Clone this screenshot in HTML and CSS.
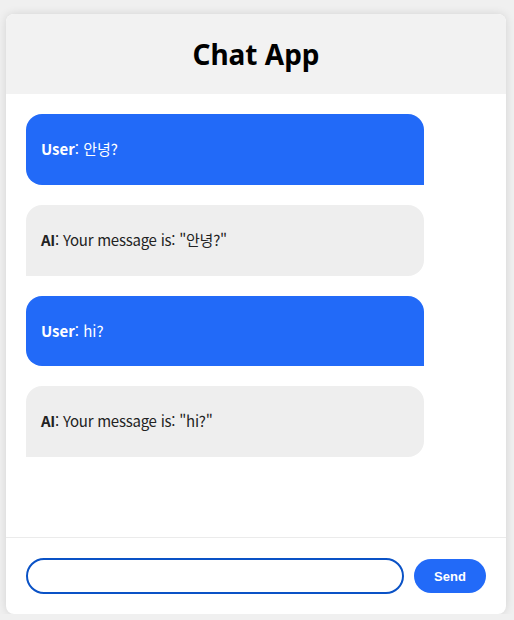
FILE: index.html
```html
<!DOCTYPE html>
<html lang="ko">
<head>
<meta charset="utf-8">
<title>Chat App</title>
<link rel="stylesheet" href="styles.css">
</head>
<body>
<div class="app">
  <header class="header"><h1 class="title">Chat App</h1></header>
  <main class="messages">
    <div class="msg user"><strong>User</strong>: 안녕?</div>
    <div class="msg ai"><strong>AI</strong>: Your message is: "안녕?"</div>
    <div class="msg user"><strong>User</strong>: hi?</div>
    <div class="msg ai"><strong>AI</strong>: Your message is: "hi?"</div>
  </main>
  <footer class="footer">
    <input class="input" type="text">
    <button class="send">Send</button>
  </footer>
</div>
</body>
</html>
```
FILE: styles.css
```css
html, body { margin: 0; padding: 0; }
body {
  background: #f0f0f0;
  font-family: "Noto Sans CJK KR", "Noto Sans", sans-serif;
  padding: 14px 8px 0 6px;
}
.app {
  width: 500px;
  height: 600px;
  background: #fff;
  border-radius: 8px;
  box-shadow: 0 0 10px rgba(0,0,0,0.12);
  display: flex;
  flex-direction: column;
  overflow: hidden;
}
.header {
  background: #f2f2f2;
  height: 80px;
  display: flex;
  align-items: center;
  justify-content: center;
}
.title {
  margin: 0;
  font-family: "Noto Sans", "Noto Sans CJK KR", sans-serif;
  font-size: 28px;
  font-weight: 700;
  color: #000;
  line-height: 1;
  padding-top: 0;
}
.messages {
  flex: 1;
  padding: 20px 20px 0;
  display: flex;
  flex-direction: column;
  gap: 20px;
}
.msg {
  width: 368px;
  padding: 25px 15px;
  line-height: 20.75px;
  font-size: 15px;
}
.msg strong { font-weight: 700; }
.ai { letter-spacing: -0.25px; }
.user {
  background: #226af8;
  color: #fff;
  border-radius: 16px 16px 0 16px;
}
.ai {
  background: #eeeeee;
  color: #222;
  border-radius: 16px 16px 16px 0;
}
.footer {
  border-top: 1px solid #ebebeb;
  padding: 20px;
  display: flex;
  align-items: center;
  gap: 10px;
}
.input {
  box-sizing: border-box;
  width: 378px;
  height: 36px;
  border: 2px solid #0a52c6;
  border-radius: 18px;
  outline: none;
  padding: 0 12px;
  font-size: 14px;
  margin: 0;
}
.send {
  width: 72px;
  height: 34px;
  border: none;
  border-radius: 17px;
  background: #226af8;
  color: #fff;
  font-family: "Liberation Sans", Arial, sans-serif;
  font-size: 13px;
  font-weight: 700;
  padding: 0;
  margin: 0;
}
```
